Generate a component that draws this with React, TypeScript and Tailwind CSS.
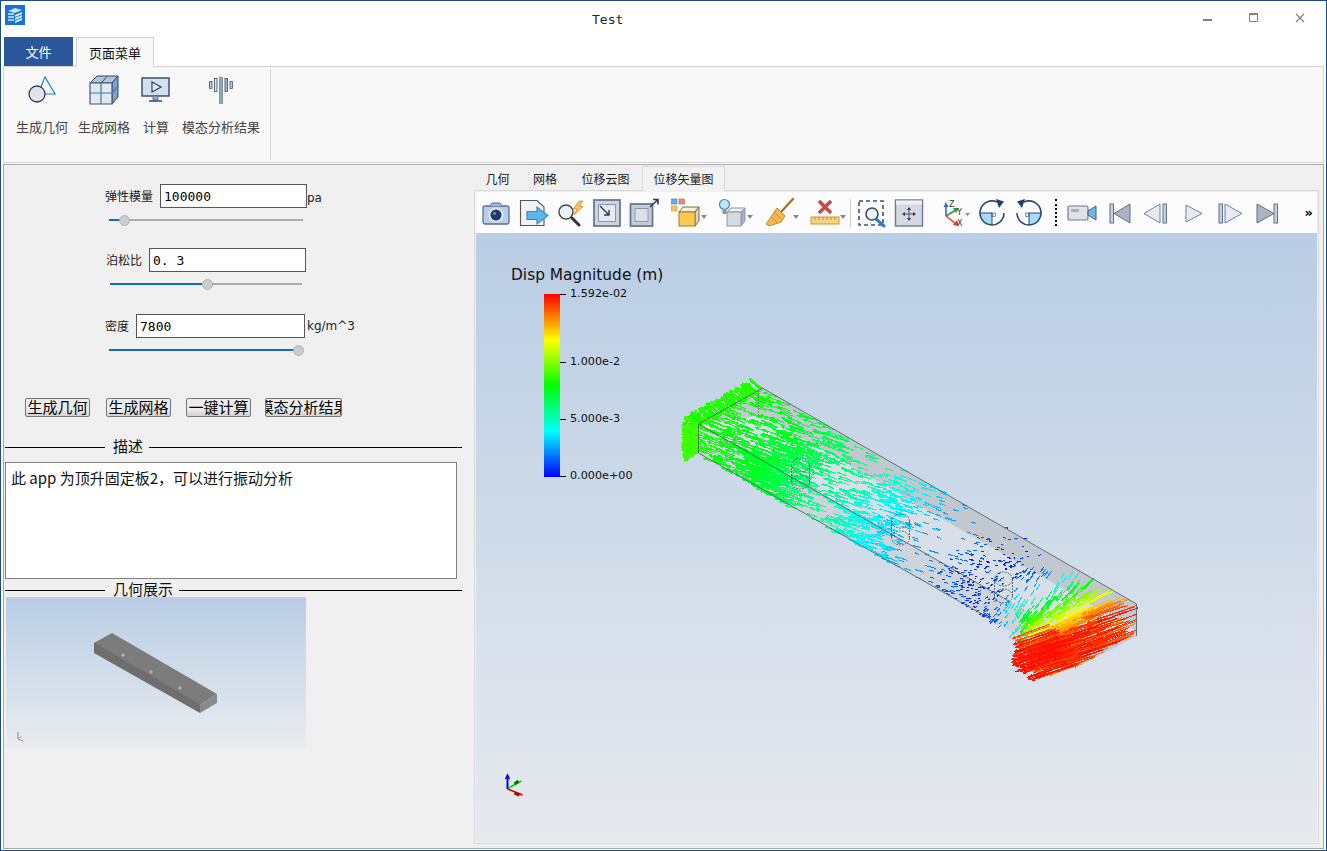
const cjk = "font-['Noto_Sans_CJK_SC','Liberation_Sans',sans-serif]";

// --- displacement field drawn in the viewport ---
const rnd = (() => {
  let a = 20240611;
  return () => {
    a = (a + 0x6d2b79f5) | 0;
    let t = Math.imul(a ^ (a >>> 15), 1 | a);
    t = (t + Math.imul(t ^ (t >>> 7), 61 | t)) ^ t;
    return ((t ^ (t >>> 14)) >>> 0) / 4294967296;
  };
})();

const lerpTable = (tbl: number[][], t: number) => {
  for (let i = 1; i < tbl.length; i++) {
    if (t <= tbl[i][0]) {
      const [t0, v0] = tbl[i - 1];
      const [t1, v1] = tbl[i];
      return v0 + ((v1 - v0) * (t - t0)) / (t1 - t0);
    }
  }
  return tbl[tbl.length - 1][1];
};

const magTable = [[0, 0.52], [0.2, 0.44], [0.35, 0.35], [0.45, 0.25], [0.62, 0.12], [0.73, 0.03], [0.8, 0.1], [0.85, 0.32], [0.9, 0.6], [0.95, 0.78], [1, 0.96]];
const dxTable = [[0, -1], [0.68, -1], [0.74, -0.9], [0.84, -0.55], [0.92, -0.85], [1, -1]];
const dyTable = [[0, -0.38], [0.68, -0.3], [0.74, 0.35], [0.84, 1], [0.92, 0.5], [1, 0.3]];

const rainbow = (v: number) => {
  const x = Math.max(0, Math.min(0.999, v)) * 4;
  const f = Math.round((x % 1) * 255);
  const seg = Math.floor(x);
  if (seg === 0) return `rgb(0,${f},255)`;
  if (seg === 1) return `rgb(0,255,${255 - f})`;
  if (seg === 2) return `rgb(${f},255,0)`;
  return `rgb(255,${255 - f},0)`;
};

const BUCKETS = 40;
const buckets: string[] = Array.from({ length: BUCKETS }, () => '');

const addArrow = (x: number, y: number, dx: number, dy: number, v: number) => {
  const n = Math.hypot(dx, dy) || 1;
  const L = 1 + 24 * v + 20 * v * v * v * v;
  const ux = dx / n;
  const uy = dy / n;
  const tx = x + ux * L;
  const ty = y + uy * L;
  const h = Math.min(2.5, L * 0.2);
  const b = Math.min(BUCKETS - 1, Math.floor(v * BUCKETS));
  buckets[b] +=
    `M${x.toFixed(1)} ${y.toFixed(1)}L${tx.toFixed(1)} ${ty.toFixed(1)}` +
    `M${(tx - ux * h - uy * h * 0.4).toFixed(1)} ${(ty - uy * h + ux * h * 0.4).toFixed(1)}L${tx.toFixed(1)} ${ty.toFixed(1)}` +
    `L${(tx - ux * h + uy * h * 0.4).toFixed(1)} ${(ty - uy * h - ux * h * 0.4).toFixed(1)}`;
};

const point = (t: number, s: number, d: number) => ({
  x: 698 + 377 * t + 64 * s,
  y: 423 + 215 * t - 36 * s + 29 * d,
});

const fieldAt = (x: number, y: number, t: number) => {
  const v = Math.max(0.005, lerpTable(magTable, t) + (rnd() - 0.5) * 0.05);
  addArrow(x, y, lerpTable(dxTable, t) + (rnd() - 0.5) * 0.1, lerpTable(dyTable, t) + (rnd() - 0.5) * 0.1, v);
};

for (let i = 0; i < 2500; i++) {
  const t = rnd();
  const keep = 0.04 + lerpTable(magTable, t) * 1.05;
  if (rnd() > keep) continue;
  const onTop = rnd() < 0.7;
  const p = onTop ? point(t, Math.pow(rnd(), 1.5), 0) : point(t, 0, rnd());
  fieldAt(p.x, p.y, t);
}
// dense clusters around the bolt holes
[[0.2, 0.35, 400], [0.45, 0.35, 310], [0.72, 0.4, 240]].forEach(([t0, s0, count]) => {
  for (let i = 0; i < count; i++) {
    const t = Math.max(0, t0 + (rnd() + rnd() - 1) * 0.1);
    const s = Math.max(0, Math.min(1, s0 + (rnd() + rnd() - 1) * 0.7));
    const p = rnd() < 0.55 ? point(t, s, 0) : point(t, 0, rnd());
    fieldAt(p.x, p.y, t);
  }
});
// left end face sticks out as a green block
for (let i = 0; i < 170; i++) {
  const y = 423 + rnd() * 29;
  addArrow(698, y, -1, -0.9 + rnd() * 1.7, 0.52 + rnd() * 0.05);
}
for (let i = 0; i < 110; i++) {
  const s = rnd();
  const p = point(0, s, 0);
  addArrow(p.x, p.y + 6 * rnd(), -1, -0.62 - rnd() * 0.3, 0.5 + rnd() * 0.05);
}
// right end runs into solid red
for (let i = 0; i < 300; i++) {
  const p = rnd() < 0.5 ? point(1, rnd(), rnd()) : point(0.93 + rnd() * 0.07, 0, rnd());
  addArrow(p.x, p.y, -1, 0.28 + rnd() * 0.12, 0.86 + rnd() * 0.13);
}

const FieldPaths = () => (
  <>
    {buckets.map((d, i) => (
      <path key={i} d={d} fill="none" stroke={rainbow((i + 0.5) / BUCKETS)} strokeWidth="1" shapeRendering="crispEdges" />
    ))}
  </>
);

const Hole = ({ x, y }: { x: number; y: number }) => (
  <g fill="none" stroke="#45525f" strokeWidth="0.8" strokeDasharray="2 1">
    <ellipse cx={x} cy={y} rx="9" ry="7" />
    <ellipse cx={x} cy={y + 17} rx="9" ry="7" />
    <path d={`M${x - 9} ${y}v17M${x + 9} ${y}v17`} />
  </g>
);

const Viewport = () => (
  <div className="relative h-[609px] bg-linear-to-b from-[#b9cde4] to-[#e7e9ee]">
    <div className="absolute left-[35px] top-[32px] font-['DejaVu_Sans',sans-serif] text-[15.4px] leading-5 text-[#111]">Disp Magnitude (m)</div>
    <div className="absolute left-[68px] top-[61px] h-[183px] w-[16px] bg-[linear-gradient(to_top,#0000ff,#00ffff_25%,#00ff00_50%,#ffff00_75%,#ff0000)]"></div>
    {[
      { top: 'top-[53px]', mark: 'top-[61px]', label: '1.592e-02' },
      { top: 'top-[121px]', mark: 'top-[129px]', label: '1.000e-2' },
      { top: 'top-[178px]', mark: 'top-[186px]', label: '5.000e-3' },
      { top: 'top-[235px]', mark: 'top-[243px]', label: '0.000e+00' },
    ].map(t => (
      <div key={t.label}>
        <div className={`absolute left-[84px] h-px w-[6px] bg-black ${t.mark}`}></div>
        <div className={`absolute left-[94px] font-['DejaVu_Sans',sans-serif] text-[11.2px] leading-4 text-[#111] ${t.top}`}>{t.label}</div>
      </div>
    ))}
    <svg className="absolute inset-0 h-full w-full" viewBox="476 232 840 609">
      <polygon points="698,423 762,387 1136,603 1136,635 1075,667 698,452" fill="#c2c8cf" />
      <polygon points="698,423 762,414 1136,630 1075,638" fill="#d9dfe6" />
      <polygon points="698,423 1075,638 1075,667 698,452" fill="#ced4db" />
      <FieldPaths />
      <Hole x={800} y={464} />
      <Hole x={900} y={520} />
      <Hole x={1003} y={578} />
      <path d="M698 423L762 387L1136 603L1136 635M698 423V452L990 618M698 423L1010 601" fill="none" stroke="#4b5560" strokeWidth="0.8" />
      <path d="M1075 638V667M758 389V415" fill="none" stroke="#66707a" strokeWidth="0.8" strokeDasharray="2 1" />
      <path d="M507 788V776" stroke="#0000e6" strokeWidth="2" fill="none" />
      <path d="M505 778L507 774L509 778" stroke="#0000e6" strokeWidth="1.5" fill="none" />
      <path d="M508 787L521 780" stroke="#00e000" strokeWidth="1.6" fill="none" />
      <path d="M514 783L518 780" stroke="#007a00" strokeWidth="3" fill="none" />
      <path d="M507 788L522 794" stroke="#e00000" strokeWidth="1.6" fill="none" />
      <path d="M514 792L519 794" stroke="#b00000" strokeWidth="3.4" fill="none" />
    </svg>
  </div>
);

// --- ribbon icons ---
const GeomIcon = () => (
  <svg width="32" height="32" viewBox="0 0 32 32">
    <path d="M19 3L29 20H12Z" fill="#f6fafd" stroke="#1f7fc4" strokeWidth="1.2" />
    <circle cx="11" cy="20" r="8" fill="#dfe3ea" stroke="#2c3a5c" strokeWidth="1.3" />
  </svg>
);
const MeshIcon = () => (
  <svg width="32" height="32" viewBox="0 0 32 32">
    <path d="M2 9L9 2H30L24 9Z" fill="#b4c6d6" stroke="#2a4668" strokeWidth="1" />
    <path d="M24 9L30 2V23L24 30Z" fill="#7fa3c2" stroke="#2a4668" strokeWidth="1" />
    <path d="M2 9H24V30H2Z" fill="#e3e8ee" stroke="#44586f" strokeWidth="1.2" />
    <path d="M2 19H24M13 9V30M24 19L30 12" stroke="#2f7fb0" strokeWidth="1.2" />
    <path d="M13 9L19.5 2" stroke="#2a4668" strokeWidth="1" />
  </svg>
);
const CalcIcon = () => (
  <svg width="30" height="26" viewBox="0 0 30 26">
    <rect x="1" y="1" width="27" height="18" fill="#cfe0f1" stroke="#33466a" strokeWidth="1.4" />
    <path d="M11 5L20 10L11 15Z" fill="#eef4fa" stroke="#2b3b60" strokeWidth="1.2" />
    <path d="M12 19H17V23H12Z" fill="#9aa7b8" stroke="#55657f" strokeWidth="0.8" />
    <path d="M8 24H21" stroke="#2b3b60" strokeWidth="1.4" />
  </svg>
);
const ModeIcon = () => (
  <svg width="24" height="27" viewBox="0 0 24 27">
    <rect x="0.5" y="4.5" width="2.5" height="7" fill="#a9c6de" stroke="#3c5c7e" strokeWidth="0.8" />
    <rect x="5.5" y="1.5" width="2.5" height="13" fill="#dfe5ec" stroke="#3c4a64" strokeWidth="0.8" />
    <rect x="10.5" y="0.5" width="3" height="26" fill="#8fa9b6" stroke="#6d8796" strokeWidth="0.8" />
    <rect x="16" y="1.5" width="2.5" height="13" fill="#a9b7c6" stroke="#3c4a64" strokeWidth="0.8" />
    <rect x="21" y="4.5" width="2.5" height="7" fill="#a9c6de" stroke="#3c5c7e" strokeWidth="0.8" />
  </svg>
);

// --- viewer toolbar icons (30 x 30) ---
const Ico = ({ children, className = '' }: { children: React.ReactNode; className?: string }) => (
  <svg width="30" height="30" viewBox="0 0 30 30" className={`shrink-0 ${className}`}>
    {children}
  </svg>
);
const Caret = ({ className = '' }: { className?: string }) => (
  <svg width="6" height="4" viewBox="0 0 6 4" className={`mt-[8px] shrink-0 ${className}`}>
    <path d="M0 0H6L3 4Z" fill="#8a8a8a" />
  </svg>
);
const VcrBar = ({ x }: { x: number }) => <rect x={x} y="6" width="3.5" height="19" fill="#c8d0dc" stroke="#5f7090" strokeWidth="1" />;

const Toolbar = () => (
  <div className="flex h-[41px] items-center bg-[#fcfcfc] pl-[5px] pr-[4px]">
    <Ico>
      <rect x="2" y="8" width="26" height="18" rx="2" fill="#b9cde6" stroke="#5a7098" strokeWidth="1.3" />
      <path d="M9 8L11 5H19L21 8" fill="#a4bad8" stroke="#5a7098" />
      <circle cx="15" cy="17" r="7.5" fill="#dfe8f4" />
      <circle cx="15" cy="17" r="5.5" fill="#1f3970" />
      <circle cx="13.5" cy="15.5" r="1.4" fill="#7f9ac8" />
    </Ico>
    <Ico className="ml-[8px]">
      <path d="M1.5 2.5H18L25 9V27.5H1.5Z" fill="#f1f2f4" stroke="#555" strokeWidth="1.1" />
      <path d="M8 13.5H18V9L29 17.5L18 26V21.5H8Z" fill="#5cb6ee" stroke="#2f88c8" strokeWidth="1.1" />
    </Ico>
    <Ico className="ml-[7px]">
      <circle cx="10" cy="14" r="7" fill="#eef2f6" stroke="#444" strokeWidth="1.4" />
      <path d="M16 20L23 27" stroke="#333" strokeWidth="3" strokeLinecap="round" />
      <path d="M23 3L17 11H21L18 17L27 8.5H23L27 3Z" fill="#f5c27a" stroke="#d07f1c" strokeWidth="0.7" />
    </Ico>
    <Ico className="ml-[6px]">
      <rect x="2" y="2" width="26" height="26" fill="#ccd4de" stroke="#67789a" strokeWidth="1.8" />
      <rect x="6.5" y="6.5" width="17" height="17" fill="#e7ebf0" stroke="#8b99b0" />
      <path d="M8 8L17 17M17 12V17H12" fill="none" stroke="#223a6a" strokeWidth="1.4" />
    </Ico>
    <Ico className="ml-[7px]">
      <rect x="1.5" y="6" width="22" height="22" fill="#c4ccd8" stroke="#67789a" strokeWidth="1.8" />
      <rect x="6" y="10.5" width="13" height="13" fill="#dce1e8" stroke="#8b99b0" />
      <path d="M21 9L29 1.5M24 1.5H29V6.5" fill="none" stroke="#223a6a" strokeWidth="1.6" />
    </Ico>
    <Ico className="ml-[12px]">
      <rect x="0.5" y="1" width="5.5" height="5" fill="#5db3e8" stroke="#3f7fb8" strokeWidth="0.6" />
      <rect x="8" y="1" width="5.5" height="5" fill="#e88a7c" stroke="#b85a4c" strokeWidth="0.6" />
      <rect x="0.5" y="8" width="5.5" height="5" fill="#f3c468" stroke="#c8953a" strokeWidth="0.6" />
      <path d="M8 14L12 9H28L24 14Z" fill="#f4f0dc" stroke="#8a6a2e" />
      <path d="M24 14L28 9V23L24 28Z" fill="#cfd6df" stroke="#8a6a2e" />
      <rect x="8" y="14" width="16" height="14" fill="#fdc954" stroke="#b0781e" />
    </Ico>
    <Caret />
    <Ico className="ml-[10px]">
      <circle cx="7.5" cy="6.5" r="5" fill="#bfe3fa" stroke="#3d8ac4" strokeWidth="1.2" />
      <rect x="5.5" y="11" width="4" height="5" fill="#8a94a4" />
      <path d="M10 14L14 10H28L24 14Z" fill="#f0f2f4" stroke="#8b97a6" />
      <path d="M24 14L28 10V23L24 28Z" fill="#aab4c0" stroke="#8b97a6" />
      <rect x="10" y="14" width="14" height="14" fill="#d6dbe1" stroke="#8b97a6" />
    </Ico>
    <Caret />
    <Ico className="ml-[12px]">
      <path d="M28 1L15 15" stroke="#a8672a" strokeWidth="2.2" strokeLinecap="round" />
      <path d="M12 10L20 18L16 24L4 28L1 26L6 19Z" fill="#f3b94e" stroke="#c98a28" strokeWidth="1" />
      <path d="M6 19L12 24M9 14L16 21" stroke="#c98a28" strokeWidth="0.8" />
    </Ico>
    <Caret className="ml-[-2px]" />
    <Ico className="ml-[11px]">
      <path d="M9 3L21 15M21 3L9 15" stroke="#c84a44" strokeWidth="3.6" />
      <rect x="1" y="19" width="28" height="7" fill="#f6d480" stroke="#c9963c" />
      <path d="M5 19v3M9 19v3M13 19v3M17 19v3M21 19v3M25 19v3" stroke="#b3802a" strokeWidth="0.8" />
    </Ico>
    <Caret />
    <div className="ml-[4px] h-[28px] w-px shrink-0 bg-[#d0d0d0]"></div>
    <Ico className="ml-[6px]">
      <rect x="2" y="3" width="24" height="24" fill="none" stroke="#3c5078" strokeWidth="1.6" strokeDasharray="4 3" />
      <circle cx="15" cy="16" r="6" fill="#eef3f8" stroke="#3a4a68" strokeWidth="1.6" />
      <path d="M19 21L27 28" stroke="#2f7fc4" strokeWidth="3" strokeLinecap="round" />
    </Ico>
    <Ico className="ml-[7px]">
      <rect x="1.5" y="2" width="27" height="26" fill="#d5d9e0" stroke="#6a7a98" strokeWidth="1.4" />
      <rect x="2" y="2.5" width="26" height="4" fill="#eef0f4" />
      <path d="M15 11V21M10 16H20" stroke="#27385e" strokeWidth="0.8" />
      <path d="M15 9L13 12H17ZM15 23L13 20H17ZM8 16L11 14V18ZM22 16L19 14V18Z" fill="#27385e" />
    </Ico>
    <Ico className="ml-[16px]">
      <path d="M6 18V7" stroke="#2f6fc0" strokeWidth="1.6" />
      <path d="M3.5 9L6 4L8.5 9Z" fill="#2f6fc0" />
      <path d="M6 18L16 12" stroke="#2f9a4a" strokeWidth="1.6" />
      <path d="M13 10L19 10L16 15Z" fill="#2f9a4a" />
      <path d="M6 18L16 26" stroke="#e03a3a" strokeWidth="1.6" />
      <path d="M13 27L19 28L17 22Z" fill="#e03a3a" />
      <text x="9" y="9" fontSize="8" fill="#333" fontFamily="DejaVu Sans">Z</text>
      <text x="17" y="17" fontSize="8" fill="#333" fontFamily="DejaVu Sans">Y</text>
      <text x="17" y="28" fontSize="8" fill="#333" fontFamily="DejaVu Sans">X</text>
      <path d="M25 15H30L27.5 18Z" fill="#8a8a8a" />
    </Ico>
    <Ico className="ml-[7px]">
      <path d="M15 15V27A12 12 0 0 1 3 15Z" fill="#a9daf6" />
      <rect x="15" y="15" width="3.5" height="3.5" fill="#d8effb" stroke="#1f5f9a" strokeWidth="0.6" />
      <path d="M3 15H15V27" fill="none" stroke="#1f4a80" strokeWidth="1" />
      <path d="M20 4A12 12 0 1 0 27 15" fill="none" stroke="#2a4a74" strokeWidth="1.6" />
      <path d="M19 1L27 3.5L22 10Z" fill="#1f3f6e" />
    </Ico>
    <Ico className="ml-[7px]">
      <path d="M15 15H27A12 12 0 0 1 15 27Z" fill="#a9daf6" />
      <rect x="11.5" y="15" width="3.5" height="3.5" fill="#d8effb" stroke="#1f5f9a" strokeWidth="0.6" />
      <path d="M27 15H15V27" fill="none" stroke="#1f4a80" strokeWidth="1" />
      <path d="M10 4A12 12 0 1 1 3 15" fill="none" stroke="#2a4a74" strokeWidth="1.6" />
      <path d="M11 1L3 3.5L8 10Z" fill="#1f3f6e" />
    </Ico>
    <div className="ml-[11px] h-[27px] w-[2px] shrink-0 border-l-2 border-dotted border-black"></div>
    <Ico className="ml-[10px]">
      <rect x="1" y="8" width="20" height="14" rx="1.5" fill="#dfe3e9" stroke="#6a7a98" strokeWidth="1.2" />
      <rect x="4" y="11" width="8" height="3" fill="#a8b0bc" />
      <path d="M21 13L29 8V22L21 17Z" fill="#6fb8e4" stroke="#445a80" strokeWidth="1" />
    </Ico>
    <Ico className="ml-[8px]">
      <VcrBar x={5} />
      <path d="M9 15.5L25 6V25Z" fill="#a8b4c4" stroke="#5f7090" strokeWidth="1" />
    </Ico>
    <Ico className="ml-[6px]">
      <VcrBar x={22} />
      <path d="M19 6V25L3 15.5Z" fill="#e6ebf1" stroke="#6f80a0" strokeWidth="1" />
    </Ico>
    <Ico className="ml-[8px]">
      <path d="M7 7V24L23 15.5Z" fill="#e6ebf1" stroke="#6f80a0" strokeWidth="1" />
    </Ico>
    <Ico className="ml-[6px]">
      <VcrBar x={4} />
      <path d="M10 6V25L27 15.5Z" fill="#e6ebf1" stroke="#6f80a0" strokeWidth="1" />
    </Ico>
    <Ico className="ml-[7px]">
      <VcrBar x={22} />
      <path d="M5 6V25L22 15.5Z" fill="#a8b4c4" stroke="#5f7090" strokeWidth="1" />
    </Ico>
    <span className="ml-auto font-['DejaVu_Sans',sans-serif] text-[13px] font-bold leading-none">»</span>
  </div>
);

// --- left form ---
const Slider = ({ className, fill }: { className: string; fill: string }) => (
  <div className={`mt-[4px] flex h-[16px] items-center ${className}`}>
    <div className={`h-[2px] bg-[#0f6cbd] ${fill}`}></div>
    <div className="-ml-[5px] h-[11px] w-[11px] shrink-0 rounded-full border border-[#b4b4b4] bg-[#cccccc]"></div>
    <div className="-ml-px h-[2px] flex-1 bg-[#acacac]"></div>
  </div>
);

const Field = ({ value, className }: { value: string; className: string }) => (
  <input
    readOnly
    value={value}
    className={`h-[24px] border border-[#555] bg-white pl-[3px] font-['DejaVu_Sans_Mono',monospace] text-[13px] text-black outline-none ${className}`}
  />
);

const PushButton = ({ label, className }: { label: string; className: string }) => (
  <button className={`flex h-[19px] shrink-0 items-center justify-center overflow-hidden whitespace-nowrap rounded-[2px] border border-[#777] bg-linear-to-b from-[#ececec] from-60% to-[#d2d2d2] text-[15px] leading-none text-black ${className}`}>
    <span className="shrink-0 -translate-y-px">{label}</span>
  </button>
);

const SectionLine = ({ label, className }: { label: string; className: string }) => (
  <div className={`ml-px flex w-[457px] items-center ${className}`}>
    <div className="h-px w-[100px] bg-black"></div>
    <span className="pb-[4px] pl-[8px] pr-[6px] text-[15px] leading-none text-[#111]">{label}</span>
    <div className="h-px flex-1 bg-black"></div>
  </div>
);

const LeftPanel = () => (
  <div className="w-[470px] shrink-0 pt-[19px]">
    <div className="ml-[101px] flex h-[24px] items-center">
      <span className="w-[55px] text-[12px] leading-none text-[#222]">弹性模量</span>
      <Field value="100000" className="w-[147px]" />
      <span className="mt-[3px] font-['DejaVu_Sans',sans-serif] text-[12px] leading-none text-[#222]">pa</span>
    </div>
    <Slider className="ml-[105px] w-[194px]" fill="w-[15px]" />
    <div className="ml-[102px] mt-[20px] flex h-[24px] items-center">
      <span className="w-[43px] text-[12px] leading-none text-[#222]">泊松比</span>
      <Field value="0. 3" className="w-[157px]" />
    </div>
    <Slider className="ml-[106px] w-[192px]" fill="w-[97px]" />
    <div className="ml-[101px] mt-[22px] flex h-[24px] items-center">
      <span className="w-[31px] text-[12px] leading-none text-[#222]">密度</span>
      <Field value="7800" className="w-[169px]" />
      <span className="ml-[2px] font-['DejaVu_Sans',sans-serif] text-[12px] leading-none text-[#222]">kg/m^3</span>
    </div>
    <Slider className="ml-[105px] w-[194px]" fill="w-[189px]" />

    <div className="ml-[21px] mt-[40px] flex">
      <PushButton label="生成几何" className="w-[65px]" />
      <PushButton label="生成网格" className="ml-[16px] w-[65px]" />
      <PushButton label="一键计算" className="ml-[15px] w-[65px]" />
      <PushButton label="模态分析结果" className="ml-[14px] w-[77px]" />
    </div>

    <SectionLine label="描述" className="mt-[20px] h-[20px]" />
    <textarea
      readOnly
      value="此 app 为顶升固定板2，可以进行振动分析"
      className="ml-px mt-[5px] block h-[117px] w-[452px] resize-none border border-[#808080] bg-white px-[5px] pt-[4px] text-[15px] leading-[22px] text-[#111] outline-none"
    />
    <SectionLine label="几何展示" className="mt-[4px] h-[14px]" />

    <div className="ml-[2px] h-[151px] w-[300px] bg-linear-to-b from-[#b9cde4] to-[#e9ecef]">
      <svg width="300" height="151" viewBox="6 597 300 151">
        <polygon points="94,643 112,633 217,694 200,705" fill="#7c7c7c" />
        <polygon points="94,643 200,705 200,713 94,653" fill="#6e6e6e" />
        <polygon points="200,705 217,694 217,703 200,713" fill="#8a8a8a" />
        <path d="M94 643L200 705" stroke="#555" strokeWidth="0.6" />
        <circle cx="123" cy="655" r="2.3" fill="#b0b0b0" stroke="#5e5e5e" strokeWidth="0.6" />
        <circle cx="151" cy="672" r="2.3" fill="#b0b0b0" stroke="#5e5e5e" strokeWidth="0.6" />
        <circle cx="180" cy="688" r="2.3" fill="#b0b0b0" stroke="#5e5e5e" strokeWidth="0.6" />
        <path d="M18 739V732" stroke="#5a5ae0" strokeWidth="0.8" />
        <path d="M18 739L22 736" stroke="#50d050" strokeWidth="0.8" />
        <path d="M18 739L23 741" stroke="#e05050" strokeWidth="0.8" />
      </svg>
    </div>
  </div>
);

const tabs = [
  { label: '几何', cls: 'w-[47px]' },
  { label: '网格', cls: 'w-[48px]' },
  { label: '位移云图', cls: 'w-[73px]' },
];

const App = () => (
  <div className={`flex h-[851px] w-[1327px] flex-col overflow-hidden border border-[#1d4a85] bg-white ${cjk}`}>
    {/* title bar */}
    <div className="flex h-[36px] shrink-0 pl-[4px] pt-[4px]">
      <svg width="20" height="20" viewBox="0 0 20 20" className="shrink-0">
        <rect width="20" height="20" fill="#1472e4" />
        <path d="M3 6L10 3L17 5L10 8Z" fill="#cfe3fb" />
        <path d="M3 8H9V10H3ZM3 11H9V13H3ZM3 14H9V16H3Z" fill="#a9cdf6" />
        <path d="M10 10L17 7V9L10 12ZM10 13L17 10V12L10 15ZM10 16L17 13V15L10 18Z" fill="#e4effc" />
      </svg>
      <span className="ml-[567px] mt-[7px] font-['DejaVu_Sans_Mono',monospace] text-[13px] leading-4 text-[#222]">Test</span>
      <div className="ml-auto mr-[21px] mt-[8px] flex gap-[36px]">
        <svg width="10" height="10" viewBox="0 0 10 10"><path d="M0 7H9" stroke="#808080" strokeWidth="2" /></svg>
        <svg width="10" height="10" viewBox="0 0 10 10"><path d="M0.5 0.5H8.5V8.5H0.5ZM0.5 1.5H8.5" fill="none" stroke="#808080" /></svg>
        <svg width="10" height="10" viewBox="0 0 10 10"><path d="M1 1L9 9M9 1L1 9" stroke="#808080" strokeWidth="1.2" /></svg>
      </div>
    </div>

    {/* ribbon tabs */}
    <div className="flex h-[29px] shrink-0 pl-[3px] text-[13px]">
      <div className="flex w-[69px] items-center justify-center bg-[#2b579a] text-white">文件</div>
      <div className="relative z-10 ml-[3px] flex h-[30px] w-[78px] items-center justify-center border-x border-t border-[#d2d2d2] bg-[#f8f8f8] text-[#111]">页面菜单</div>
    </div>

    {/* ribbon */}
    <div className="ml-[2px] flex h-[97px] w-[1321px] shrink-0 border border-[#d2d2d2] bg-[#f8f8f8] text-[13px] text-[#444]">
      <div className="flex w-[266px] shrink-0 pl-[12px] pt-[7px]">
        <div className="flex w-[52px] flex-col items-center">
          <div className="flex h-[32px] items-center"><GeomIcon /></div>
          <span className="mt-[12px] leading-[18px]">生成几何</span>
        </div>
        <div className="ml-[10px] flex w-[52px] flex-col items-center">
          <div className="flex h-[32px] items-center"><MeshIcon /></div>
          <span className="mt-[12px] leading-[18px]">生成网格</span>
        </div>
        <div className="ml-[13px] flex w-[26px] flex-col items-center">
          <div className="flex h-[32px] items-center"><CalcIcon /></div>
          <span className="mt-[12px] leading-[18px]">计算</span>
        </div>
        <div className="ml-[13px] flex w-[78px] flex-col items-center">
          <div className="flex h-[32px] items-center"><ModeIcon /></div>
          <span className="mt-[12px] leading-[18px]">模态分析结果</span>
        </div>
      </div>
      <div className="mt-[2px] h-[91px] w-px bg-[#d6d6d6]"></div>
    </div>

    <div className="h-px shrink-0 bg-white"></div>

    {/* main area */}
    <div className="mb-[2px] ml-[2px] flex w-[1321px] flex-1 border border-[#a8a8a8] bg-[#f0f0f0]">
      <LeftPanel />
      <div className="flex flex-1 flex-col pb-[4px] pr-[4px] pt-px">
        <div className="flex h-[24px] shrink-0 items-end text-[12px] text-[#222]">
          {tabs.map(t => (
            <div key={t.label} className={`flex h-[23px] items-center justify-center ${t.cls}`}>{t.label}</div>
          ))}
          <div className="relative z-10 -mb-px flex h-[25px] w-[83px] items-center justify-center border-x border-t border-[#d9d9d9] bg-[#f2f2f2]">位移矢量图</div>
        </div>
        <div className="border border-[#d9d9d9] p-px">
          <Toolbar />
          <Viewport />
        </div>
      </div>
    </div>
  </div>
);

export default App;
